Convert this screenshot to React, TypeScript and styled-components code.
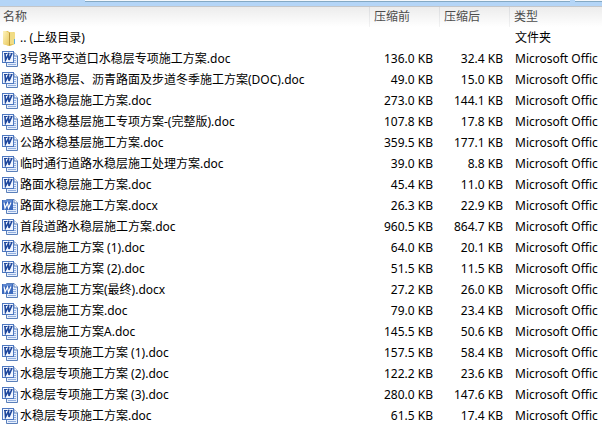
import React from "react";
import styled, { createGlobalStyle } from "styled-components";

const GlobalStyle = createGlobalStyle`
  * { box-sizing: border-box; }
  body {
    margin: 0;
    background: #fff;
    color: #000;
    font-family: "Noto Sans", "Noto Sans CJK SC", sans-serif;
    font-size: 12px;
    line-height: 20px;
  }
`;

const Page = styled.main`
  overflow: hidden;
`;

const ToolStrip = styled.header`
  display: flex;
  gap: 5px;
  height: 7px;
  padding-left: 85px;
  background: #b4d5f7;
  border-bottom: 1px solid #c3c6ca;
`;

const StripField = styled.div<{ $grow?: boolean }>`
  flex: ${(p) => (p.$grow ? "1 1 auto" : "0 0 27px")};
  height: 2px;
  background: #f3f8fd;
  border-bottom: 1px solid #84a9c4;
`;

const FileTable = styled.table`
  width: 100%;
  table-layout: fixed;
  border-collapse: separate;
  border-spacing: 0;
`;

const NameCol = styled.col``;
const SizeCol = styled.col`
  width: 70px;
`;
const TypeCol = styled.col`
  width: 92px;
`;

const HeadCell = styled.th`
  height: 20px;
  padding: 0 0 0 4px;
  text-align: left;
  font-weight: 400;
  color: #4c4c4c;
  white-space: nowrap;
  border-right: 1px solid;
  border-image: linear-gradient(#d8dadd, #f4f4f4) 1;
  background: linear-gradient(#ececec, #fff);
  &:first-child { padding-left: 3px; }
  &:last-child { border-right: 0; }
`;

const Cell = styled.td<{ $numeric?: boolean }>`
  height: 21px;
  padding: ${(p) => (p.$numeric ? "0 7px 0 0" : "0 0 0 5px")};
  text-align: ${(p) => (p.$numeric ? "right" : "left")};
  white-space: nowrap;
  overflow: hidden;
`;

const NameCell = styled(Cell)`
  padding-left: 2px;
`;

const FileLabel = styled.span`
  display: flex;
  align-items: center;
  gap: 2px;
`;

const Icon = styled.svg`
  flex: none;
  width: 16px;
  height: 16px;
`;

const FolderIcon = () => (
  <Icon viewBox="0 0 16 16" aria-hidden="true">
    <defs>
      <linearGradient id="folder-front" x1="0" x2="1" y1="0" y2="1">
        <stop offset="0" stopColor="#fdf3bd" />
        <stop offset="1" stopColor="#e9c95f" />
      </linearGradient>
    </defs>
    <path d="M1 1h5l1 1h5l1 1v11l-5 2-7-2z" fill="#e3c457" />
    <path d="M7 2h4l2 1v11H8z" fill="#f1dc85" />
    <path d="M1 1l3 0 3 2v13l-6-2z" fill="url(#folder-front)" />
    <path d="M7 3l1-1v13l-1 1z" fill="#b9983c" />
    <path d="M12 9h1v5h-1z" fill="#5fb0dd" />
  </Icon>
);

const WordIcon = ({ modern }: { modern?: boolean }) => (
  <Icon viewBox="0 0 16 16" aria-hidden="true">
    <path d="M4.500 1.500h7.500l3.500 3.500v10.500h-11z" fill="#e6effc" stroke="#5a7fba" />
    <path d="M12 1.500v3.500h3.500" fill="#fff" stroke="#5a7fba" />
    <path d="M6 7.500h8M6 9.500h8M6 11.500h8M6 13.500h8" stroke="#93afdf" />
    {modern ? (
      <>
        <rect x="0" y="2" width="11" height="10" fill="#3b69bd" />
        <path d="M1 3h9" stroke="#7fa4e2" />
        <path d="M2 4.500l1 5.500 2.500-5 1 5 2.500-5.500" fill="none" stroke="#fff" strokeWidth="1.200" />
      </>
    ) : (
      <>
        <rect x="0.5" y="0.5" width="11" height="11" fill="#f3f7ff" stroke="#4e78c0" />
        <path d="M2 2.500h3M5.500 2.500h2M8.500 2.500h2" stroke="#1e479c" />
        <path d="M3 2.500l.5 6.500 3-5.500.5 5.500 2.800-6.500" fill="none" stroke="#1e479c" strokeWidth="1.600" />
      </>
    )}
  </Icon>
);

const files = [
  ["3号路平交道口水稳层专项施工方案.doc", "136.0", "32.4"],
  ["道路水稳层、沥青路面及步道冬季施工方案(DOC).doc", "49.0", "15.0"],
  ["道路水稳层施工方案.doc", "273.0", "144.1"],
  ["道路水稳基层施工专项方案-(完整版).doc", "107.8", "17.8"],
  ["公路水稳基层施工方案.doc", "359.5", "177.1"],
  ["临时通行道路水稳层施工处理方案.doc", "39.0", "8.8"],
  ["路面水稳层施工方案.doc", "45.4", "11.0"],
  ["路面水稳层施工方案.docx", "26.3", "22.9"],
  ["首段道路水稳层施工方案.doc", "960.5", "864.7"],
  ["水稳层施工方案 (1).doc", "64.0", "20.1"],
  ["水稳层施工方案 (2).doc", "51.5", "11.5"],
  ["水稳层施工方案(最终).docx", "27.2", "26.0"],
  ["水稳层施工方案.doc", "79.0", "23.4"],
  ["水稳层施工方案A.doc", "145.5", "50.6"],
  ["水稳层专项施工方案 (1).doc", "157.5", "58.4"],
  ["水稳层专项施工方案 (2).doc", "122.2", "23.6"],
  ["水稳层专项施工方案 (3).doc", "280.0", "147.6"],
  ["水稳层专项施工方案.doc", "61.5", "17.4"],
];

export default function App() {
  return (
    <Page lang="zh-CN">
      <GlobalStyle />
      <ToolStrip>
        <StripField $grow />
        <StripField />
      </ToolStrip>
      <FileTable>
        <colgroup>
          <NameCol />
          <SizeCol />
          <SizeCol />
          <TypeCol />
        </colgroup>
        <thead>
          <tr>
            <HeadCell scope="col">名称</HeadCell>
            <HeadCell scope="col">压缩前</HeadCell>
            <HeadCell scope="col">压缩后</HeadCell>
            <HeadCell scope="col">类型</HeadCell>
          </tr>
        </thead>
        <tbody>
          <tr>
            <NameCell>
              <FileLabel><FolderIcon />.. (上级目录)</FileLabel>
            </NameCell>
            <Cell $numeric />
            <Cell $numeric />
            <Cell>文件夹</Cell>
          </tr>
          {files.map(([name, before, after]) => (
            <tr key={name}>
              <NameCell>
                <FileLabel><WordIcon modern={name.endsWith("docx")} />{name}</FileLabel>
              </NameCell>
              <Cell $numeric>{before} KB</Cell>
              <Cell $numeric>{after} KB</Cell>
              <Cell>Microsoft Offic</Cell>
            </tr>
          ))}
        </tbody>
      </FileTable>
    </Page>
  );
}
